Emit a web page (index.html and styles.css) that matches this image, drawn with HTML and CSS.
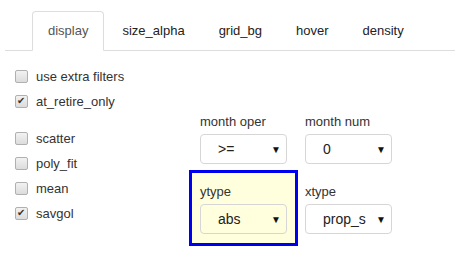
FILE: index.html
```html
<!DOCTYPE html>
<html>
  <head>
    <meta charset="utf-8">
    <title>display options</title>
    <link rel="stylesheet" href="styles.css">
  </head>
  <body>
    <nav class="tabs">
      <a class="tab active">display</a>
      <a class="tab">size_alpha</a>
      <a class="tab">grid_bg</a>
      <a class="tab">hover</a>
      <a class="tab">density</a>
    </nav>
    <main class="panel">
      <section class="checks">
        <label class="check"><span class="box"></span>use extra filters</label>
        <label class="check"><span class="box on"></span>at_retire_only</label>
        <span class="spacer"></span>
        <label class="check"><span class="box"></span>scatter</label>
        <label class="check"><span class="box"></span>poly_fit</label>
        <label class="check"><span class="box"></span>mean</label>
        <label class="check"><span class="box on"></span>savgol</label>
      </section>
      <section class="fields">
        <div class="field">
          <span class="label">month oper</span>
          <div class="select"><span class="value">&gt;=</span><span class="arrow">&#9660;</span></div>
        </div>
        <div class="field">
          <span class="label">month num</span>
          <div class="select"><span class="value">0</span><span class="arrow">&#9660;</span></div>
        </div>
        <div class="field picked">
          <span class="label">ytype</span>
          <div class="select"><span class="value">abs</span><span class="arrow">&#9660;</span></div>
        </div>
        <div class="field">
          <span class="label">xtype</span>
          <div class="select"><span class="value">prop_s</span><span class="arrow">&#9660;</span></div>
        </div>
      </section>
    </main>
  </body>
</html>
```
FILE: styles.css
```css
body, html {
  margin: 0;
  width: 100%;
  height: 100%;
  overflow: hidden;
  background: #fff;
  font-family: "Liberation Sans", Arial, sans-serif;
  font-size: 13px;
  color: #333;
}
.tabs {
  display: flex;
  margin: 11px 10px 0 5px;
  padding-left: 27px;
  border-bottom: 1px solid #ddd;
}
.tab {
  display: block;
  margin-right: 2px;
  margin-bottom: -1px;
  padding: 9px 15px;
  line-height: 20px;
  border: 1px solid transparent;
  border-radius: 4px 4px 0 0;
  color: #222;
}
.tab.active {
  color: #555;
  border-color: #ddd;
  border-bottom-color: #fff;
  background: #fff;
}
.panel {
  display: flex;
  padding: 13px 0 0 15px;
}
.checks {
  display: flex;
  flex-direction: column;
  width: 177px;
}
.check {
  display: flex;
  align-items: center;
  height: 25px;
}
.spacer {
  height: 12px;
}
.box {
  position: relative;
  width: 11px;
  height: 11px;
  margin-right: 8px;
  border: 1px solid #b0b0b0;
  border-radius: 2px;
  background: linear-gradient(#f2f2f2, #dcdcdc);
}
.box.on::after {
  content: "\2714";
  position: absolute;
  left: 1px;
  top: -2px;
  font-size: 10px;
  line-height: 14px;
  color: #333;
}
.fields {
  display: grid;
  grid-template-columns: 103px 103px;
  column-gap: 2px;
  margin-top: 39px;
  align-self: flex-start;
}
.field {
  display: flex;
  flex-direction: column;
  padding: 9px 8px;
}
.field.picked {
  outline: 3px solid #0000f0;
  background: #ffffdd;
}
.label {
  line-height: 20px;
}
.select {
  display: flex;
  align-items: center;
  box-sizing: border-box;
  width: 87px;
  height: 30px;
  margin-top: 2px;
  padding: 0 5px 0 17px;
  border: 1px solid #d6d6d6;
  border-radius: 4px;
  font-size: 14px;
  color: #222;
}
.value {
  flex: 1;
}
.arrow {
  font-size: 10px;
  color: #111;
}
```
